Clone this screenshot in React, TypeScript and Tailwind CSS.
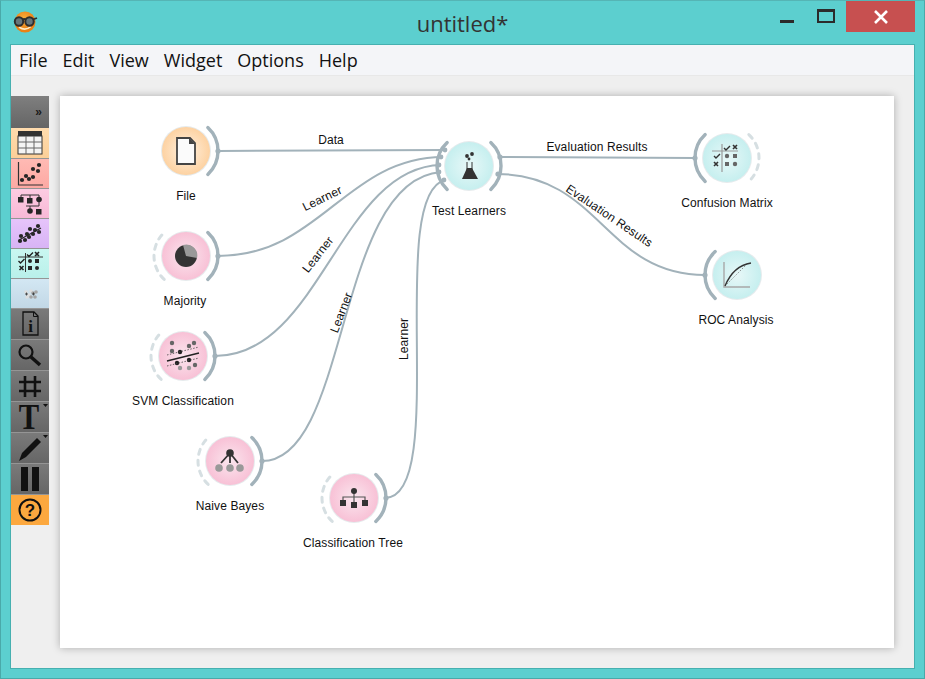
import type { ReactNode } from "react";

const EDGE = "#a2b2ba";
const DASH = "#d6dfe2";
const DARK = "#333333";

type Hue = "orange" | "pink" | "teal";

const point = (cx: number, cy: number, r: number, deg: number) => {
  const a = (deg * Math.PI) / 180;
  return `${cx + r * Math.cos(a)} ${cy + r * Math.sin(a)}`;
};

const arc = (cx: number, cy: number, r: number, mid: number) =>
  `M${point(cx, cy, r, mid - 47)} A${r} ${r} 0 0 1 ${point(cx, cy, r, mid + 47)}`;

const Node = ({
  x,
  y,
  hue,
  label,
  labelX,
  labelY,
  input,
  output,
  children,
}: {
  x: number;
  y: number;
  hue: Hue;
  label: string;
  labelX: number;
  labelY: number;
  input: "solid" | "dashed" | "none";
  output: "solid" | "dashed" | "none";
  children: ReactNode;
}) => (
  <g>
    {input !== "none" && (
      <path
        d={arc(x, y, 32, 180)}
        fill="none"
        stroke={input === "solid" ? EDGE : DASH}
        strokeWidth={input === "solid" ? 3.4 : 3}
        strokeLinecap="round"
        strokeDasharray={input === "solid" ? undefined : "5 6"}
      />
    )}
    {output !== "none" && (
      <path
        d={arc(x, y, 32, 0)}
        fill="none"
        stroke={output === "solid" ? EDGE : DASH}
        strokeWidth={output === "solid" ? 3.4 : 3}
        strokeLinecap="round"
        strokeDasharray={output === "solid" ? undefined : "5 6"}
      />
    )}
    <circle cx={x} cy={y} r={25} fill="#e6ebed" />
    <circle cx={x} cy={y} r={24} fill={`url(#${hue})`} />
    {children}
    <text x={labelX} y={labelY} textAnchor="middle" className="font-['Liberation_Sans',sans-serif] text-[12px] tracking-[0.1px]" fill="#111111">
      {label}
    </text>
  </g>
);

const Check = ({ x, y, s = 1, c = DARK }: { x: number; y: number; s?: number; c?: string }) => (
  <path d={`M${x - 3 * s} ${y} l${2 * s} ${2 * s} l${4 * s} ${-4 * s}`} fill="none" stroke={c} strokeWidth={1.4} />
);

const Cross = ({ x, y, c = DARK }: { x: number; y: number; c?: string }) => (
  <path d={`M${x - 2} ${y - 2} l4 4 m0 -4 l-4 4`} fill="none" stroke={c} strokeWidth={1.6} />
);

const Scheme = () => (
  <svg className="absolute inset-0 w-full h-full" viewBox="60 96 834 552">
    <defs>
      <radialGradient id="orange">
        <stop offset="0%" stopColor="#fff2e2" />
        <stop offset="100%" stopColor="#fdd2a2" />
      </radialGradient>
      <radialGradient id="pink">
        <stop offset="0%" stopColor="#fae6ee" />
        <stop offset="100%" stopColor="#f8c1d6" />
      </radialGradient>
      <radialGradient id="teal">
        <stop offset="0%" stopColor="#e8f8f8" />
        <stop offset="100%" stopColor="#c6efef" />
      </radialGradient>
    </defs>

    {/* links */}
    <g fill="none" stroke={EDGE} strokeWidth={2}>
      <path d="M218 151 L446 150" />
      <path d="M218 256 C320 256 345 158 443 157" />
      <path d="M215 356 C320 356 340 167 441 165" />
      <path d="M262 461 C350 461 335 180 441 172" />
      <path d="M385 498 C450 498 385 195 445 180" />
      <path d="M500 157 L695 158" />
      <path d="M497 174 C600 174 605 275 705 275" />
    </g>

    {/* link labels */}
    <g className="font-['Liberation_Sans',sans-serif] text-[12px] tracking-[0.1px]" fill="#111111" textAnchor="middle">
      <text x={331} y={144}>Data</text>
      <text transform="translate(324 202) rotate(-26)">Learner</text>
      <text transform="translate(321 257) rotate(-52)">Learner</text>
      <text transform="translate(345 314) rotate(-69)">Learner</text>
      <text transform="translate(408 339) rotate(-90)">Learner</text>
      <text x={597} y={151}>Evaluation Results</text>
      <text transform="translate(607 219) rotate(34)">Evaluation Results</text>
    </g>

    <Node x={186} y={151} hue="orange" label="File" labelX={186} labelY={200} input="none" output="solid">
      <path d="M177 138 H190 L195 143 V164 H177 Z" fill="#fbfbfb" stroke="#444444" strokeWidth={1.8} />
      <path d="M189 138 V144 H195 Z" fill="#444444" />
    </Node>

    <Node x={186} y={256} hue="pink" label="Majority" labelX={185} labelY={305} input="dashed" output="solid">
      <circle cx={186} cy={256} r={11} fill={DARK} />
      <path d="M186 256 L183 245 A11 11 0 0 1 197 258 Z" fill="#999999" />
    </Node>

    <Node x={183} y={356} hue="pink" label="SVM Classification" labelX={183} labelY={405} input="dashed" output="solid">
      <g fill="#666666">
        <circle cx={172} cy={343} r={2.2} />
        <circle cx={194} cy={343} r={2.2} />
        <circle cx={189} cy={346} r={2.2} />
        <circle cx={172} cy={351} r={2.2} />
        <circle cx={195} cy={365} r={2.2} />
      </g>
      <g fill="#222222">
        <circle cx={180} cy={352} r={2.2} />
        <circle cx={177} cy={363} r={2.2} />
        <circle cx={189} cy={360} r={2.2} />
      </g>
      <g fill="#999999">
        <circle cx={180} cy={368} r={2.2} />
        <circle cx={189} cy={368} r={2.2} />
      </g>
      <path d="M167 361 L199 353" stroke="#222222" strokeWidth={1.4} />
      <path d="M167 355 L199 347 M167 366 L199 358" stroke="#444444" strokeWidth={0.8} strokeDasharray="1.5 1.5" />
    </Node>

    <Node x={230} y={461} hue="pink" label="Naive Bayes" labelX={230} labelY={510} input="dashed" output="solid">
      <circle cx={219} cy={468} r={3.8} fill="#999999" />
      <circle cx={230} cy={468} r={3.8} fill="#999999" />
      <circle cx={240} cy={468} r={3.8} fill="#999999" />
      <path d="M230 453 L221 463 M230 453 V463 M230 453 L238 463" stroke={DARK} strokeWidth={1.8} fill="none" />
      <circle cx={230} cy={453} r={3.8} fill={DARK} />
    </Node>

    <Node x={354} y={498} hue="pink" label="Classification Tree" labelX={353} labelY={547} input="dashed" output="solid">
      <path d="M354 491 V505 M343 503 V497 H365 V503" stroke="#555555" strokeWidth={1.2} fill="none" />
      <circle cx={354} cy={491} r={3} fill={DARK} />
      <rect x={340} y={500} width={6} height={6} fill={DARK} />
      <rect x={351} y={502} width={6} height={6} fill={DARK} />
      <rect x={362} y={500} width={6} height={6} fill={DARK} />
    </Node>

    <Node x={469} y={166} hue="teal" label="Test Learners" labelX={469} labelY={215} input="solid" output="solid">
      <circle cx={467} cy={156} r={1.9} fill={DARK} />
      <circle cx={472} cy={154} r={1.9} fill={DARK} />
      <circle cx={469} cy={159} r={1.4} fill={DARK} />
      <path d="M467 162 L467 170 M472 162 L472 170" stroke={DARK} strokeWidth={1} fill="none" />
      <path d="M467 168 H472 L478 179 H462 Z" fill={DARK} />
    </Node>

    <Node x={727} y={158} hue="teal" label="Confusion Matrix" labelX={727} labelY={207} input="solid" output="dashed">
      <path d="M722 144 V172 M712 151 H738" stroke="#999999" strokeWidth={1.2} />
      <Check x={727} y={148} />
      <Cross x={735} y={147} />
      <Check x={717} y={156} />
      <Cross x={716} y={164} />
      <circle cx={727} cy={156} r={2.2} fill="#666666" />
      <rect x={733} y={154} width={4} height={4} fill="#666666" />
      <rect x={725} y={162} width={4} height={4} fill="#666666" />
      <circle cx={735} cy={164} r={2.2} fill="#666666" />
    </Node>

    <Node x={737} y={275} hue="teal" label="ROC Analysis" labelX={736} labelY={324} input="solid" output="none">
      <path d="M724 262 V287 H750" fill="none" stroke="#a8a8a8" strokeWidth={1.4} />
      <path d="M725 286 L748 263" stroke="#777777" strokeWidth={0.8} strokeDasharray="1.5 1.5" />
      <path d="M725 286 C730 274 738 265 751 263" fill="none" stroke={DARK} strokeWidth={1.4} />
    </Node>

    {/* anchors */}
    <g fill={EDGE}>
      <circle cx={218} cy={151} r={2.6} />
      <circle cx={218} cy={256} r={2.6} />
      <circle cx={215} cy={356} r={2.6} />
      <circle cx={262} cy={461} r={2.6} />
      <circle cx={386} cy={498} r={2.6} />
      <circle cx={500} cy={157} r={2.6} />
      <circle cx={498} cy={174} r={2.6} />
      <circle cx={695} cy={158} r={2.6} />
      <circle cx={705} cy={275} r={2.6} />
      <circle cx={445} cy={150} r={2.4} />
      <circle cx={441} cy={157} r={2.4} />
      <circle cx={439} cy={165} r={2.4} />
      <circle cx={439} cy={172} r={2.4} />
      <circle cx={444} cy={180} r={2.4} />
    </g>
  </svg>
);

const Dock = ({ h, className, children }: { h: string; className: string; children?: ReactNode }) => (
  <div className={`${h} w-full border-b border-[#959595] flex items-center justify-center ${className}`}>{children}</div>
);

const Ico = ({ children }: { children: ReactNode }) => (
  <svg width="38" height="30" viewBox="0 0 38 30" className="block overflow-visible">
    {children}
  </svg>
);

const Dots = ({ pts, r = 2.1, c = "#262626" }: { pts: number[][]; r?: number; c?: string }) => (
  <g fill={c}>
    {pts.map(([x, y]) => (
      <circle key={`${x}-${y}`} cx={x} cy={y} r={r} />
    ))}
  </g>
);

const Sidebar = () => (
  <div className="w-[38px] mt-[20px] self-start flex flex-col">
    <Dock h="h-[32px]" className="bg-gradient-to-b from-[#7f7f7f] to-[#656565] !items-end !justify-end pr-[7px] pb-[10px] !border-b-0">
      <span className="text-[12px] leading-none font-bold text-[#1a1a1a] font-['Liberation_Sans',sans-serif]">»</span>
    </Dock>
    <Dock h="h-[31px]" className="bg-gradient-to-b from-[#ffdcae] to-[#fccf98]">
      <Ico>
        <rect x={7} y={3} width={24} height={5} fill="#333333" />
        <rect x={7} y={8} width={24} height={18} fill="#f4f4f4" stroke="#333333" strokeWidth={1} />
        <path d="M15 8 V26 M23 8 V26 M7 14 H31 M7 20 H31" stroke="#666666" strokeWidth={1} />
      </Ico>
    </Dock>
    <Dock h="h-[30px]" className="bg-gradient-to-b from-[#ffbab4] to-[#fda9a3]">
      <Ico>
        <path d="M7.5 3 V26 H32" fill="none" stroke="#333333" strokeWidth={1.2} />
        <Dots pts={[[28, 6], [22, 10], [27, 12], [15, 17], [22, 18], [11, 21], [18, 20]]} />
      </Ico>
    </Dock>
    <Dock h="h-[30px]" className="bg-gradient-to-b from-[#fdcce2] to-[#f7b8d6]">
      <Ico>
        <path d="M10 10 V6 H28 V10 M19 6 V11 M28 10 V17 H19 V22 M19 17 H15" fill="none" stroke="#333333" strokeWidth={1} />
        <rect x={7} y={8} width={5.5} height={5.5} fill="#262626" />
        <rect x={16} y={9} width={5.5} height={5.5} fill="#262626" />
        <circle cx={28} cy={10.5} r={2.8} fill="#262626" />
        <circle cx={19} cy={22} r={2.8} fill="#262626" />
        <rect x={25} y={20} width={5.5} height={5.5} fill="#262626" />
      </Ico>
    </Dock>
    <Dock h="h-[30px]" className="bg-gradient-to-b from-[#e6c4fb] to-[#d8b4f5]">
      <Ico>
        <path d="M8 21 L30 9" stroke="#262626" strokeWidth={1.2} />
        <Dots pts={[[10, 17], [16, 15], [19, 10], [24, 11], [27, 7], [14, 21], [9, 22], [22, 15], [28, 13], [18, 18]]} />
      </Ico>
    </Dock>
    <Dock h="h-[30px]" className="bg-gradient-to-b from-[#c9f7f1] to-[#b9f0ea]">
      <Ico>
        <path d="M14.5 4 V23 M7 8 H32" stroke="#333333" strokeWidth={1} />
        <Check x={19} y={5.5} c="#222222" />
        <Cross x={26} y={5} c="#222222" />
        <Check x={10.5} y={12} c="#222222" />
        <Cross x={10.5} y={19} c="#222222" />
        <circle cx={19} cy={12} r={2} fill="#262626" />
        <rect x={24} y={10} width={4} height={4} fill="#262626" />
        <rect x={17} y={17} width={4} height={4} fill="#262626" />
        <circle cx={26} cy={19} r={2} fill="#262626" />
      </Ico>
    </Dock>
    <Dock h="h-[30px]" className="bg-gradient-to-b from-[#d3e7f3] to-[#c2d8e6]">
      <Ico>
        <Dots pts={[[15, 13], [18, 16], [16, 18], [20, 12]]} r={1.8} c="#dddddd" />
        <Dots pts={[[22, 14], [24, 18], [20, 18], [25, 13]]} r={1.8} c="#a5a5a5" />
        <path d="M14 15 h3 m-1.5 -1.5 v3 M21 15 h3 m-1.5 -1.5 v3" stroke="#333333" strokeWidth={0.8} />
      </Ico>
    </Dock>
    <Dock h="h-[31px]" className="bg-gradient-to-b from-[#7a7a7a] to-[#666666]">
      <Ico>
        <path d="M12 3 H23 L27 7 V26 H12 Z" fill="none" stroke="#111111" strokeWidth={1.3} />
        <path d="M22.5 3 V7.5 H27" fill="none" stroke="#111111" strokeWidth={1} />
        <text x={19.5} y={23} textAnchor="middle" fill="#111111" className="font-['Liberation_Serif',serif] font-bold text-[17px]">i</text>
      </Ico>
    </Dock>
    <Dock h="h-[31px]" className="bg-gradient-to-b from-[#7a7a7a] to-[#666666]">
      <Ico>
        <circle cx={15} cy={12} r={6.5} fill="none" stroke="#111111" strokeWidth={2.2} />
        <path d="M20 17 L29 25" stroke="#111111" strokeWidth={3.4} />
      </Ico>
    </Dock>
    <Dock h="h-[31px]" className="bg-gradient-to-b from-[#7a7a7a] to-[#666666]">
      <Ico>
        <path d="M14 5 V26 M24 5 V26 M8 11 H30 M8 20 H30" stroke="#111111" strokeWidth={2.6} />
      </Ico>
    </Dock>
    <Dock h="h-[31px]" className="bg-gradient-to-b from-[#7a7a7a] to-[#666666]">
      <Ico>
        <text transform="translate(18 27) scale(0.85 1)" textAnchor="middle" fill="#111111" className="font-['Liberation_Serif',serif] font-bold text-[36px]">T</text>
        <path d="M32 2 H37 L34.5 5 Z" fill="#111111" />
      </Ico>
    </Dock>
    <Dock h="h-[31px]" className="bg-gradient-to-b from-[#7a7a7a] to-[#666666]">
      <Ico>
        <path d="M8 28 L11 20 L26 5 L30 9 L15 24 Z" fill="#111111" />
        <path d="M32 2 H37 L34.5 5 Z" fill="#111111" />
      </Ico>
    </Dock>
    <Dock h="h-[31px]" className="bg-gradient-to-b from-[#7a7a7a] to-[#666666]">
      <Ico>
        <rect x={10} y={3} width={7} height={24} fill="#111111" />
        <rect x={21} y={3} width={7} height={24} fill="#111111" />
      </Ico>
    </Dock>
    <div className="h-[30px] w-full flex items-center justify-center bg-[#fca83f]">
      <Ico>
        <circle cx={19} cy={15} r={10.5} fill="none" stroke="#111111" strokeWidth={2} />
        <text x={19} y={21} textAnchor="middle" fill="#111111" className="font-['Liberation_Sans',sans-serif] font-bold text-[17px]">?</text>
      </Ico>
    </div>
  </div>
);

const Logo = () => (
  <svg width="26" height="22" viewBox="0 0 26 22" className="block">
    <defs>
      <radialGradient id="face" cx="45%" cy="35%">
        <stop offset="0%" stopColor="#fbb040" />
        <stop offset="100%" stopColor="#ea8215" />
      </radialGradient>
    </defs>
    <circle cx={12} cy={11} r={10.5} fill="url(#face)" />
    <path d="M6 16 Q12 20.5 18 15.5" fill="none" stroke="#ffe9c0" strokeWidth={1.6} />
    <circle cx={6} cy={10.5} r={4.2} fill="#66757a" stroke="#2e2e2e" strokeWidth={2} />
    <circle cx={16.5} cy={10.5} r={4.2} fill="#66757a" stroke="#2e2e2e" strokeWidth={2} />
    <path d="M9.5 8.5 Q11 7.5 13 8.5 M20 8.5 L24 7" fill="none" stroke="#2e2e2e" strokeWidth={1.8} />
  </svg>
);

const App = () => {
  return (
    <div className="w-[925px] h-[679px] bg-[#5ccfcf] border border-[#4aa9a9] border-t-[#55b5b5] flex flex-col overflow-hidden">
      {/* title bar */}
      <div className="h-[43px] grid grid-cols-[1fr_auto_1fr] items-start shrink-0">
        <div className="pl-[12px] pt-[10px]">
          <Logo />
        </div>
        <div className="pt-[6px] text-[22px] leading-[32px] text-[#333333] font-['Open_Sans',sans-serif]">untitled*</div>
        <div className="flex justify-end items-start pr-[9px]">
          <div className="w-[14px] h-[3px] bg-[#2b2b2b] mt-[19px] mr-[23px]" />
          <div className="w-[18px] h-[14px] border-2 border-t-[3px] border-[#2b2b2b] mt-[8px] mr-[11px]" />
          <div className="w-[69px] h-[31px] bg-[#c75050] flex items-center justify-center">
            <svg width="14" height="14" viewBox="0 0 14 14">
              <path d="M1 1 L13 13 M13 1 L1 13" stroke="#ffffff" strokeWidth={2.6} />
            </svg>
          </div>
        </div>
      </div>

      {/* main window */}
      <div className="mx-[9px] mb-[9px] flex-1 border border-[#46b0b0] bg-[#efefef] flex flex-col">
        <div className="h-[31px] shrink-0 bg-[#f4f5f8] border-b border-[#e8e8e8] flex items-center pl-[8px] gap-[15px] text-[18px] text-[#111111] font-['Open_Sans',sans-serif]">
          <span>File</span>
          <span>Edit</span>
          <span>View</span>
          <span>Widget</span>
          <span>Options</span>
          <span>Help</span>
        </div>
        <div className="flex-1 flex items-start">
          <Sidebar />
          <div className="relative ml-[11px] mt-[20px] w-[834px] h-[552px] bg-white shadow-[0_0_8px_rgba(0,0,0,0.28)]">
            <Scheme />
          </div>
        </div>
      </div>
    </div>
  );
};

export default App;
